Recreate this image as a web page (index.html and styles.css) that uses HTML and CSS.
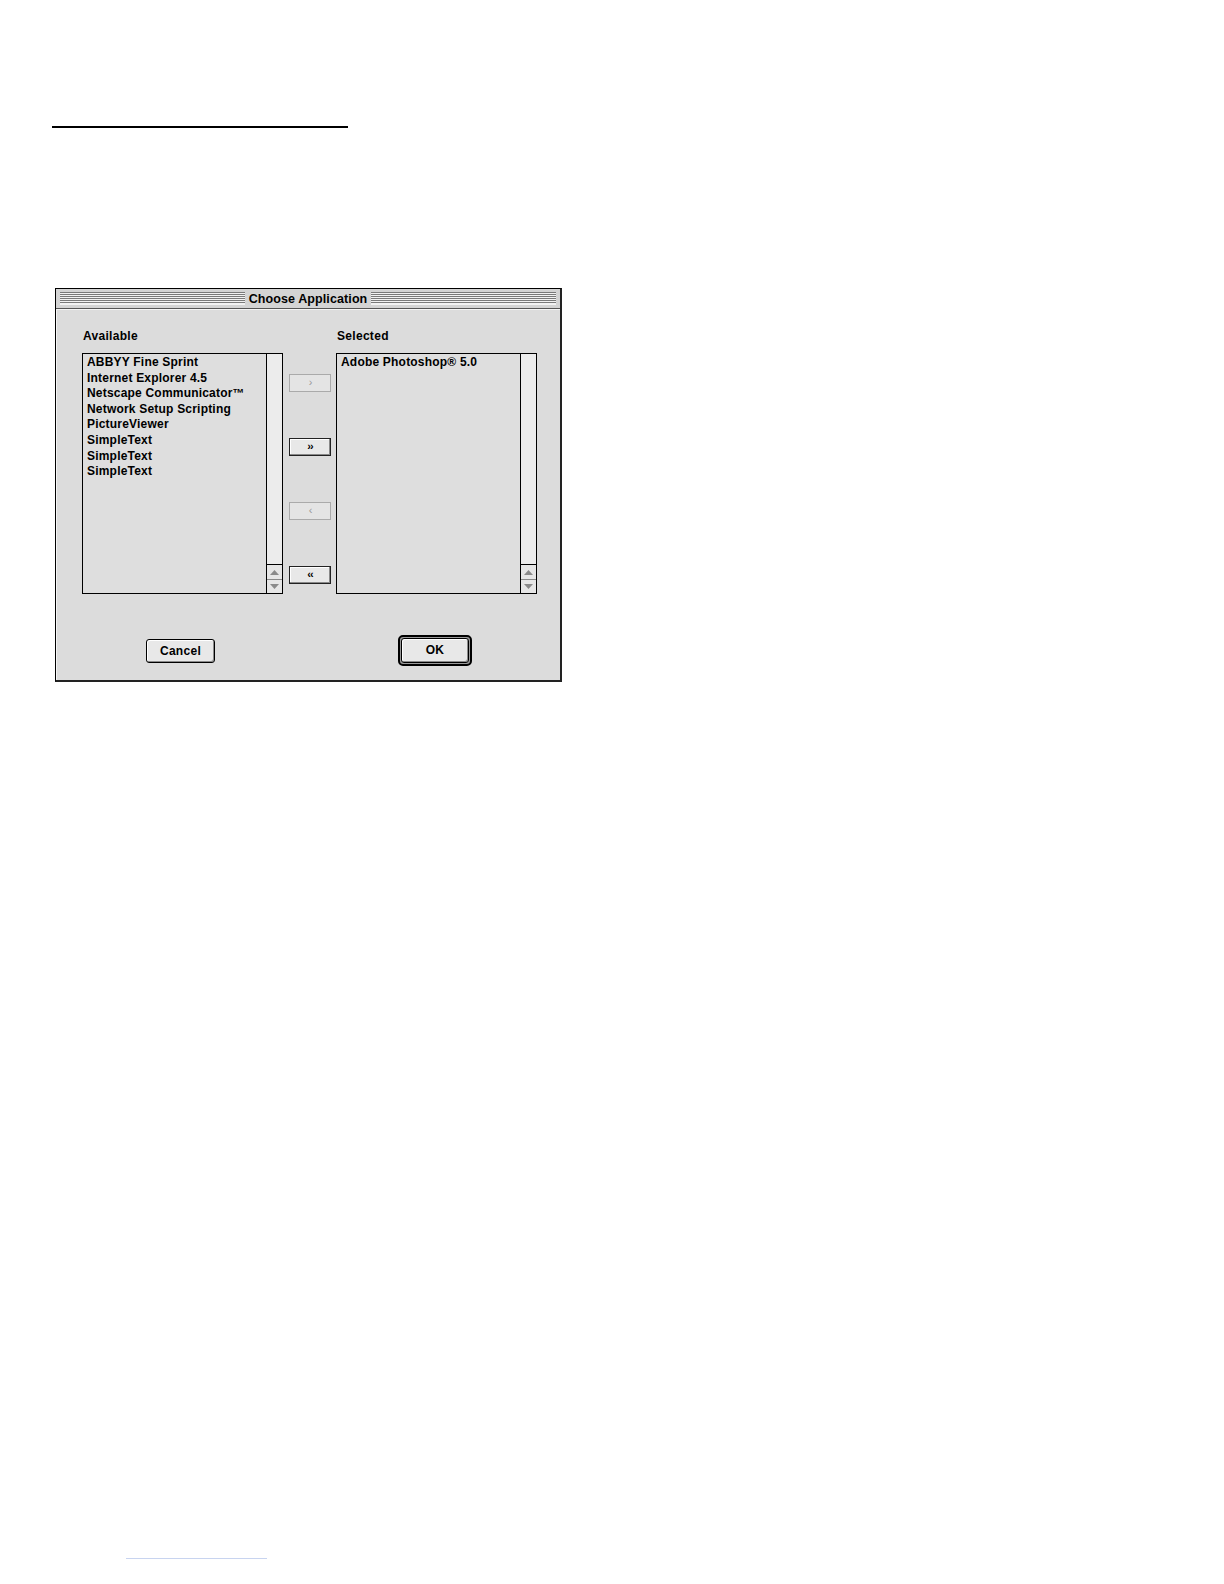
FILE: index.html
```html
<!DOCTYPE html>
<html>
<head>
<meta charset="utf-8">
<link rel="stylesheet" href="styles.css">
</head>
<body>
<div class="page">
  <div class="rule-top"></div>
  <div class="dialog">
    <div class="titlebar">
      <div class="stripes"></div>
      <div class="title">Choose Application</div>
      <div class="stripes"></div>
    </div>
    <div class="body">
      <div class="lists">
        <div class="col">
          <div class="label">Available</div>
          <div class="listbox">
            <div class="items">
              <div class="item">ABBYY Fine Sprint</div>
              <div class="item">Internet Explorer 4.5</div>
              <div class="item">Netscape Communicator™</div>
              <div class="item">Network Setup Scripting</div>
              <div class="item">PictureViewer</div>
              <div class="item">SimpleText</div>
              <div class="item">SimpleText</div>
              <div class="item">SimpleText</div>
            </div>
            <div class="scrollbar">
              <div class="track"></div>
              <div class="arrow"><svg width="9" height="5" viewBox="0 0 9 5"><path d="M4.5 0 L9 5 L0 5 Z" fill="#8a8a8a"/></svg></div>
              <div class="arrow"><svg width="9" height="5" viewBox="0 0 9 5"><path d="M0 0 L9 0 L4.5 5 Z" fill="#8a8a8a"/></svg></div>
            </div>
          </div>
        </div>
        <div class="movers">
          <div class="mbtn disabled">›</div>
          <div class="mbtn">››</div>
          <div class="mbtn disabled">‹</div>
          <div class="mbtn">‹‹</div>
        </div>
        <div class="col">
          <div class="label">Selected</div>
          <div class="listbox">
            <div class="items">
              <div class="item">Adobe Photoshop® 5.0</div>
            </div>
            <div class="scrollbar">
              <div class="track"></div>
              <div class="arrow"><svg width="9" height="5" viewBox="0 0 9 5"><path d="M4.5 0 L9 5 L0 5 Z" fill="#8a8a8a"/></svg></div>
              <div class="arrow"><svg width="9" height="5" viewBox="0 0 9 5"><path d="M0 0 L9 0 L4.5 5 Z" fill="#8a8a8a"/></svg></div>
            </div>
          </div>
        </div>
      </div>
      <div class="actions">
        <div class="btn cancel">Cancel</div>
        <div class="okring"><div class="btn ok">OK</div></div>
      </div>
    </div>
  </div>
  <div class="rule-bottom"></div>
</div>
</body>
</html>
```
FILE: styles.css
```css
* { box-sizing: border-box; }
html, body { margin: 0; padding: 0; background: #fff; }
body {
  width: 1224px;
  height: 1584px;
  font-family: "Liberation Sans", Arial, sans-serif;
  font-weight: bold;
  font-size: 12px;
  color: #000;
}
.page {
  position: relative;
  width: 1224px;
  height: 1584px;
  padding-top: 126px;
}
.rule-top {
  margin-left: 52px;
  width: 296px;
  height: 2px;
  background: #000;
}
.dialog {
  margin-left: 55px;
  margin-top: 160px;
  width: 507px;
  height: 394px;
  border: 1px solid #000;
  border-right: 2px solid #222;
  border-bottom: 2px solid #222;
  background: #dcdcdc;
  display: flex;
  flex-direction: column;
}
.titlebar {
  height: 20px;
  background: #d4d4d4;
  border-bottom: 1px solid #555;
  display: flex;
  align-items: center;
  padding: 0 4px;
  gap: 3px;
}
.stripes {
  flex: 1;
  height: 13px;
  background: repeating-linear-gradient(to bottom, #7a7a7a 0 1px, #f2f2f2 1px 2px);
  border-bottom: 1px solid #f2f2f2;
}
.title {
  font-size: 12.5px;
  letter-spacing: 0.1px;
  padding: 0 1px;
  line-height: 18px;
}
.body {
  flex: 1;
  border-top: 1px solid #f4f4f4;
  border-left: 1px solid #f4f4f4;
  padding: 19px 0 0 25px;
  display: flex;
  flex-direction: column;
}
.lists {
  display: flex;
  align-items: flex-start;
}
.col {
  display: flex;
  flex-direction: column;
}
.label {
  height: 24px;
  line-height: 14px;
  padding-left: 1px;
  letter-spacing: 0.3px;
}
.listbox {
  width: 201px;
  height: 241px;
  border: 1px solid #000;
  display: flex;
  background: #dedede;
}
.items {
  flex: 1;
  padding: 1px 0 0 4px;
}
.item {
  height: 15.6px;
  line-height: 15.6px;
  letter-spacing: 0.2px;
  white-space: nowrap;
}
.scrollbar {
  width: 16px;
  border-left: 1px solid #000;
  display: flex;
  flex-direction: column;
  background: #ececec;
}
.track { flex: 1; background: #ececec; }
.arrow {
  height: 15px;
  border-top: 1px solid #000;
  display: flex;
  align-items: center;
  justify-content: center;
  background: #e6e6e6;
}
.arrow:last-child { height: 14px; border-top: 1px solid #888; }
.movers {
  width: 53px;
  padding: 45px 0 0 6px;
  display: flex;
  flex-direction: column;
  gap: 46px;
}
.mbtn {
  width: 42px;
  height: 18px;
  border: 1px solid #222;
  background: #e8e8e8;
  box-shadow: inset -1px -1px 0 #888, inset 1px 1px 0 #fff;
  font-size: 11px;
  line-height: 15px;
  text-align: center;
  letter-spacing: -1px;
}
.mbtn.disabled {
  border-color: #aaa;
  color: #999;
  box-shadow: none;
  background: #e4e4e4;
  font-weight: normal;
}
.actions {
  display: flex;
  align-items: flex-start;
  padding: 41px 0 0 64px;
}
.btn {
  height: 24px;
  border: 1px solid #000;
  border-radius: 3px;
  background: #e8e8e8;
  box-shadow: inset -1px -1px 0 #8a8a8a, inset 1px 1px 0 #fff;
  text-align: center;
  line-height: 22px;
  letter-spacing: 0.3px;
}
.cancel { width: 69px; margin-top: 4px; }
.okring {
  margin-left: 183px;
  width: 74px;
  height: 31px;
  border: 2px solid #000;
  border-radius: 5px;
  background: #9a9a9a;
  padding: 1px;
}
.ok {
  width: 100%;
  height: 100%;
  border-radius: 3px;
  line-height: 23px;
}
.rule-bottom {
  margin-left: 126px;
  margin-top: 876px;
  width: 141px;
  height: 1px;
  background: #c8d4f0;
}
```
